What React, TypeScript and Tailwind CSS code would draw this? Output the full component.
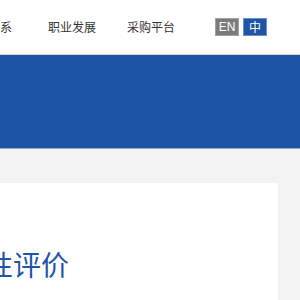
export default function App() {
  return (
    <div className="w-[300px] h-[300px] overflow-hidden bg-[#f3f3f3]" style={{ fontFamily: '"Noto Sans CJK SC", "Noto Sans", sans-serif' }}>
      <header className="h-[55px] bg-white border-b border-[#d4d4d4] flex items-center text-[12px] text-[#333] whitespace-nowrap">
        <span className="w-[48px]">系</span>
        <span className="w-[79px]">职业发展</span>
        <span className="w-[88px]">采购平台</span>
        <div className="flex gap-[4px]">
          <span className="w-[24px] h-[18px] flex items-center justify-center bg-[#7b7b7b] border border-[#a0a0a0] text-white text-[12px]" style={{ fontFamily: '"Liberation Sans", sans-serif' }}>EN</span>
          <span className="w-[24px] h-[18px] flex items-center justify-center bg-[#1e55a6] border border-[#6a8fcf] text-white text-[12px]">中</span>
        </div>
      </header>
      <div className="h-[94px] bg-[#1d54a5] border-b border-[#8faad8]" />
      <div className="pt-[34px]">
        <div className="w-[278px] h-[200px] bg-white pt-[63px]">
          <div className="ml-[-15px] text-[28px] leading-[36px] text-[#1f56a8] whitespace-nowrap">性评价</div>
        </div>
      </div>
    </div>
  );
}
